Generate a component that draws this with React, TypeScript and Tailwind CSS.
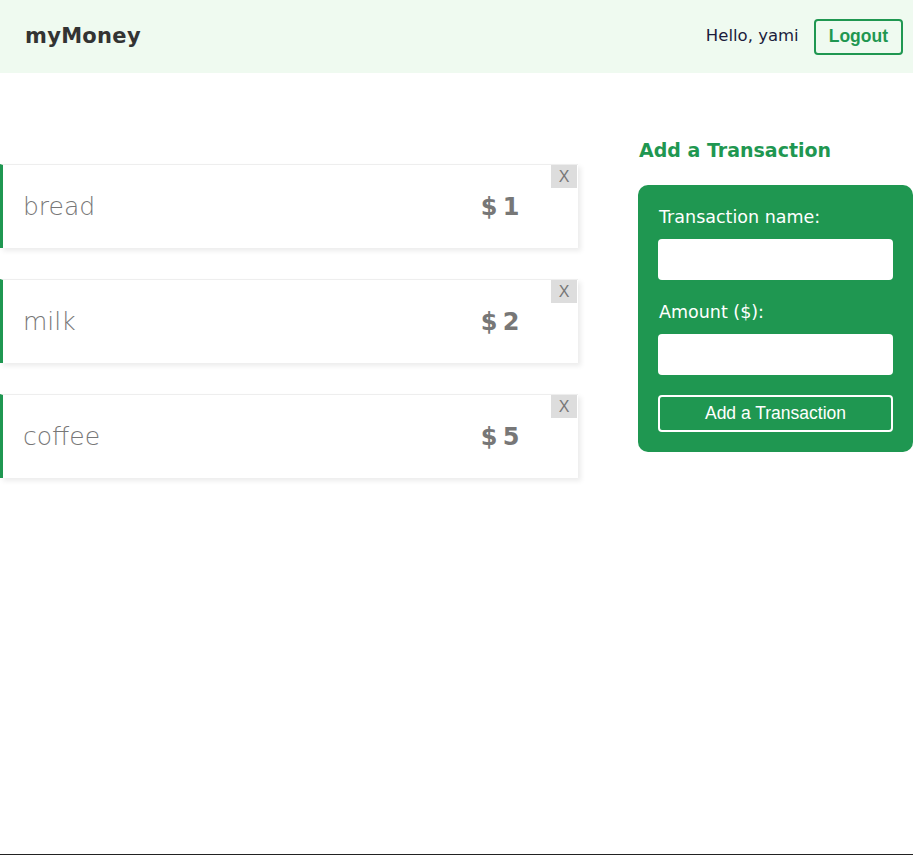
import { useState } from "react";

interface Transaction {
  id: number;
  name: string;
  amount: number;
}

const App = () => {
  const [name, setName] = useState("");
  const [amount, setAmount] = useState("");
  const [transactions, setTransactions] = useState<Transaction[]>([
    { id: 1, name: "bread", amount: 1 },
    { id: 2, name: "milk", amount: 2 },
    { id: 3, name: "coffee", amount: 5 },
  ]);

  const handleAdd = () => {
    if (!name.trim() || !amount) return;
    setTransactions([...transactions, { id: Date.now(), name: name.trim(), amount: Number(amount) }]);
    setName("");
    setAmount("");
  };

  return (
    <div className="min-h-[855px] bg-white border-b border-[#222] font-['DejaVu_Sans',sans-serif] text-[#333]">
      <nav className="h-[73px] bg-[#effaf0] flex items-center justify-between pl-[25px] pr-[10px]">
        <p className="text-[21px] font-bold text-[#333] tracking-[0.3px]">myMoney</p>
        <div className="flex items-center gap-[15px]">
          <p className="text-[16.5px] text-[#1c1c3c]">Hello, yami</p>
          <button className="h-[36px] px-[13px] border-2 border-[#1f9751] rounded-[4px] text-[#1f9751] font-bold text-[17.5px] font-['Liberation_Sans',sans-serif]">
            Logout
          </button>
        </div>
      </nav>

      <div className="flex gap-[60px] pt-[64px]">
        <ul className="w-[578px] flex flex-col gap-[31px] pt-[27px]">
          {transactions.map((t) => (
            <li
              key={t.id}
              className="relative h-[84px] flex items-center justify-between bg-white border-l-[3px] border-l-[#1f9751] border-t border-t-[#eee] shadow-[3px_3px_5px_rgba(0,0,0,0.08)] pl-[20px] pr-[60px]"
            >
              <span className="text-[25px] font-extralight text-[#777]">{t.name}</span>
              <span className="text-[24px] font-bold text-[#777] tracking-[-1.5px]">$ {t.amount}</span>
              <button
                onClick={() => setTransactions(transactions.filter((x) => x.id !== t.id))}
                className="absolute top-0 right-[1px] w-[26px] h-[23px] bg-[#ddd] text-[#777] text-[16px] leading-[23px] text-center font-['Liberation_Sans',sans-serif]"
              >
                X
              </button>
            </li>
          ))}
        </ul>

        <div className="w-[275px]">
          <h3 className="text-[19px] font-bold text-[#1f9751] pl-[1px] leading-[24px] mt-[1px]">Add a Transaction</h3>
          <div className="mt-[23px] bg-[#1f9751] rounded-[10px] px-[20px] pt-[20px] pb-[20px]">
            <label className="block">
              <span className="block text-white text-[17.5px] leading-[24px] pl-[1px]">Transaction name:</span>
              <input
                value={name}
                onChange={(e) => setName(e.target.value)}
                className="mt-[10px] w-full h-[41px] bg-white rounded-[4px] px-2 outline-none"
              />
            </label>
            <label className="block mt-[20px]">
              <span className="block text-white text-[17.5px] leading-[24px] pl-[1px]">Amount ($):</span>
              <input
                value={amount}
                onChange={(e) => setAmount(e.target.value)}
                className="mt-[10px] w-full h-[41px] bg-white rounded-[4px] px-2 outline-none"
              />
            </label>
            <button
              onClick={handleAdd}
              className="mt-[20px] w-full h-[37px] border-2 border-white rounded-[4px] text-white text-[17.5px] font-['Liberation_Sans',sans-serif]"
            >
              Add a Transaction
            </button>
          </div>
        </div>
      </div>
    </div>
  );
};

export default App;
